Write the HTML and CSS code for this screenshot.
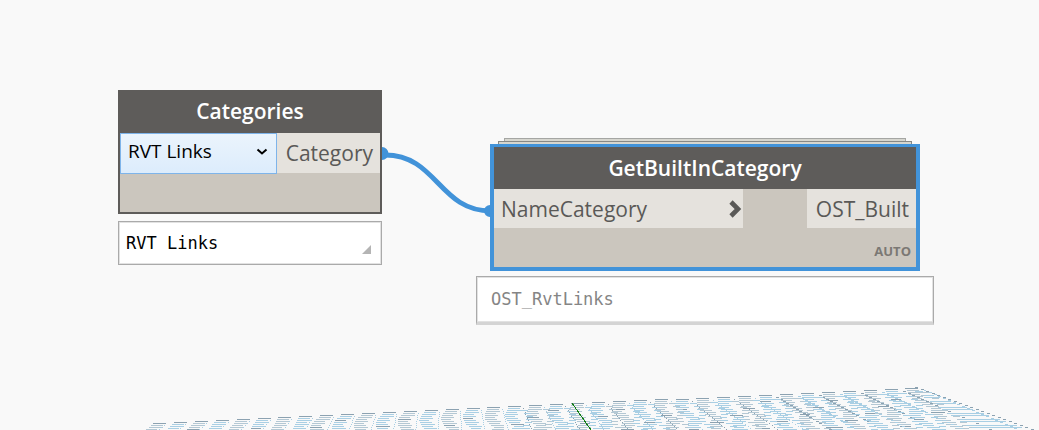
FILE: index.html
```html
<!DOCTYPE html>
<html lang="en">
<head>
<meta charset="utf-8">
<title>Node graph</title>
<link rel="stylesheet" href="styles.css">
</head>
<body>
<main class="canvas">
  <svg class="ground" id="ground" width="1039" height="430" aria-hidden="true" shape-rendering="crispEdges"></svg>

  <section class="group group-categories">
    <div class="node">
      <h2 class="node-title">Categories</h2>
      <div class="node-row">
        <label class="picker" aria-label="Category name">
          <select class="picker-select"><option>RVT Links</option></select>
          <svg class="picker-arrow" width="12" height="8" viewBox="0 0 12 8" aria-hidden="true"><path d="M1.5 1.5 6 5.5 10.5 1.5" fill="none" stroke="#000" stroke-width="2"/></svg>
        </label>
        <span class="port port-grow">Category</span>
      </div>
      <div class="node-foot"></div>
    </div>
    <div class="preview">RVT Links
      <svg class="grip" width="9" height="9" viewBox="0 0 9 9" aria-hidden="true"><path d="M9 0V9H0Z" fill="#b4b4b4"/></svg>
    </div>
  </section>

  <section class="group group-builtin">
    <div class="stack"><div class="sheet sheet-back"></div><div class="sheet"></div></div>
    <div class="node node-selected">
      <h2 class="node-title">GetBuiltInCategory</h2>
      <div class="node-row node-row-split">
        <span class="port port-input">NameCategory
          <svg width="14" height="18" viewBox="0 0 14 18" aria-hidden="true"><path d="M2 2 9 9 2 16" fill="none" stroke="#5a5957" stroke-width="4.6"/></svg>
        </span>
        <span class="port port-output">OST_Built</span>
      </div>
      <div class="node-foot">AUTO</div>
    </div>
    <div class="preview preview-muted">OST_RvtLinks</div>
  </section>

  <svg class="wire" width="1039" height="430" aria-hidden="true">
    <path d="M382 147a6 6 0 0 1 0 13ZM490 205a6 6 0 0 0 0 12Z" fill="#4293d9"/>
    <path d="M385 155C437 155 439 211 491 211" fill="none" stroke="#4293d9" stroke-width="5"/>
  </svg>
</main>
<script src="ground.js"></script>
</body>
</html>
```
FILE: styles.css
```css
* { box-sizing: border-box; }

body {
  margin: 0;
  background: #f9f9f9;
  color: #5a5957;
  font-family: "Open Sans", "Noto Sans", sans-serif;
  font-size: 21px;
}

.canvas {
  position: relative;
  height: 100vh;
  overflow: hidden;
}

.ground, .wire {
  position: absolute;
  top: 0;
  left: 0;
  pointer-events: none;
}

.group { position: absolute; }
.group-categories { left: 118px; top: 90px; width: 264px; }
.group-builtin { left: 476px; top: 138px; width: 458px; }

.node {
  background: #cbc6be;
  border: 2px solid #5e5c5a;
  border-top: 0;
}

.node-selected {
  margin: 0 14px;
  border: 4px solid #4293d9;
  border-top-width: 3px;
}

.node-title {
  margin: 0;
  background: #5e5c5a;
  color: #fff;
  font-size: 21px;
  font-weight: 600;
  line-height: 43px;
  text-align: center;
}

.node-row { display: flex; height: 40px; }
.node-row-split { justify-content: space-between; height: 39px; }
.node-selected .node-title { line-height: 42px; }

.port {
  padding: 0 7px;
  background: #e5e2dd;
  line-height: 40px;
  text-align: right;
  white-space: nowrap;
}

.port-grow { flex: 1; }

.port-input {
  display: flex;
  align-items: center;
  justify-content: space-between;
  width: 249px;
  padding-right: 0;
}

.port-output { padding-left: 9px; }

.picker { position: relative; width: 157px; }

.picker-select {
  appearance: none;
  width: 100%;
  height: 41px;
  padding: 0 7px 5px;
  border: 1px solid #7eb4ea;
  border-radius: 0;
  background: linear-gradient(#ebf4fc, #dcecfc);
  color: #000;
  font: inherit;
  font-size: 19px;
}

.picker-arrow { position: absolute; right: 9px; top: 15px; }

.node-foot {
  height: 39px;
  padding: 14px 5px 0;
  color: #7b7874;
  font-size: 13px;
  font-weight: 700;
  line-height: 18px;
  text-align: right;
}

.preview {
  display: flex;
  justify-content: space-between;
  height: 44px;
  margin-top: 7px;
  padding: 0 10px 0 7px;
  border: 1px solid #aaa;
  background: #fff;
  box-shadow: inset 0 0 0 1px #e2e2e2;
  color: #000;
  font-family: "DejaVu Sans Mono", monospace;
  font-size: 17px;
  line-height: 42px;
}

.grip { align-self: flex-end; margin-bottom: 10px; }

.preview-muted {
  height: 49px;
  margin-top: 5px;
  padding-left: 14px;
  border-bottom: 3px solid #d4d4d4;
  color: #858585;
  line-height: 44px;
}

.stack { padding: 0 22px; }

.sheet {
  height: 3px;
  border: 1px solid #878885;
  border-bottom: 0;
  background: #d6d6cf;
}

.sheet-back { margin: 0 6px; border-color: #a5a6a3; }
```
FILE: ground.js
```js
// Draws the receding ground grid as short stepped dashes.
(function () {
  var svg = document.getElementById('ground');
  var light = '#a9cfe4', grey = '#b4c8d4', dark = '#8ca2b1';
  var paths = {};
  paths[light] = paths[grey] = paths[dark] = '';

  function dash(color, x, y, w) {
    x = Math.round(x);
    y = Math.round(y);
    var edge = Math.round(918 + (y - 387) * 2.75);
    if (y > 429 || x < 145 || x >= edge) return;
    w = Math.min(w, edge - x);
    paths[color] += 'M' + x + ' ' + y + 'h' + w + 'v1h-' + w + 'z';
  }

  for (var k = 0; k < 37; k++) {
    var x0 = 153 + k * 20.9;
    var y0 = 423 - k * 0.98;
    var slope = (x0 - 430) / 200;
    var post = k > 16 && k % 2 ? dark : light;
    var cell = k % 2 ? light : grey;

    dash(dark, x0, y0, 13);
    for (var j = 1; j < 44; j++) {
      // Each column of dashes bows around the middle of its 20px band.
      var bow = k > 7 ? Math.pow((j % 20) / 10 - 1, 2) * 7 - 5 : 0;
      var drift = k > 16 ? j * slope * 0.5 : j * slope * 0.8;
      if (j % 2 === 0) {
        var strong = (j + k * 6) % 20 < 2 && j > 5;
        dash(strong ? dark : cell, x0 + drift + bow, y0 + j, 10 + j % 5);
        dash(post, x0 + 14 + j * slope, y0 + j, k > 28 ? 3 : 1);
      }
      if (k > 16 && j % 3 === 0) {
        dash(k % 3 ? light : grey, x0 + 11 + drift - bow, y0 + j + 1, 7);
      }
    }
  }

  // Columns that enter along the receding right-hand edge.
  for (var r = 0; r < 22; r++) {
    var ex = 918 + r * 5.5;
    var ey = 387 + r * 2;
    dash(dark, ex - 3, ey, 3);
    for (var n = 2; n < 22 - r; n++) {
      if ((n + r) % 3) dash(n % 4 ? light : grey, ex - 9 + n * 3, ey + n * 2, 8);
    }
  }

  Object.keys(paths).forEach(function (color) {
    var p = document.createElementNS('http://www.w3.org/2000/svg', 'path');
    p.setAttribute('d', paths[color]);
    p.setAttribute('fill', color);
    svg.appendChild(p);
  });

  var axis = document.createElementNS('http://www.w3.org/2000/svg', 'path');
  axis.setAttribute('d', 'M572 403L591 430');
  axis.setAttribute('stroke', '#138013');
  svg.appendChild(axis);
})();
```
